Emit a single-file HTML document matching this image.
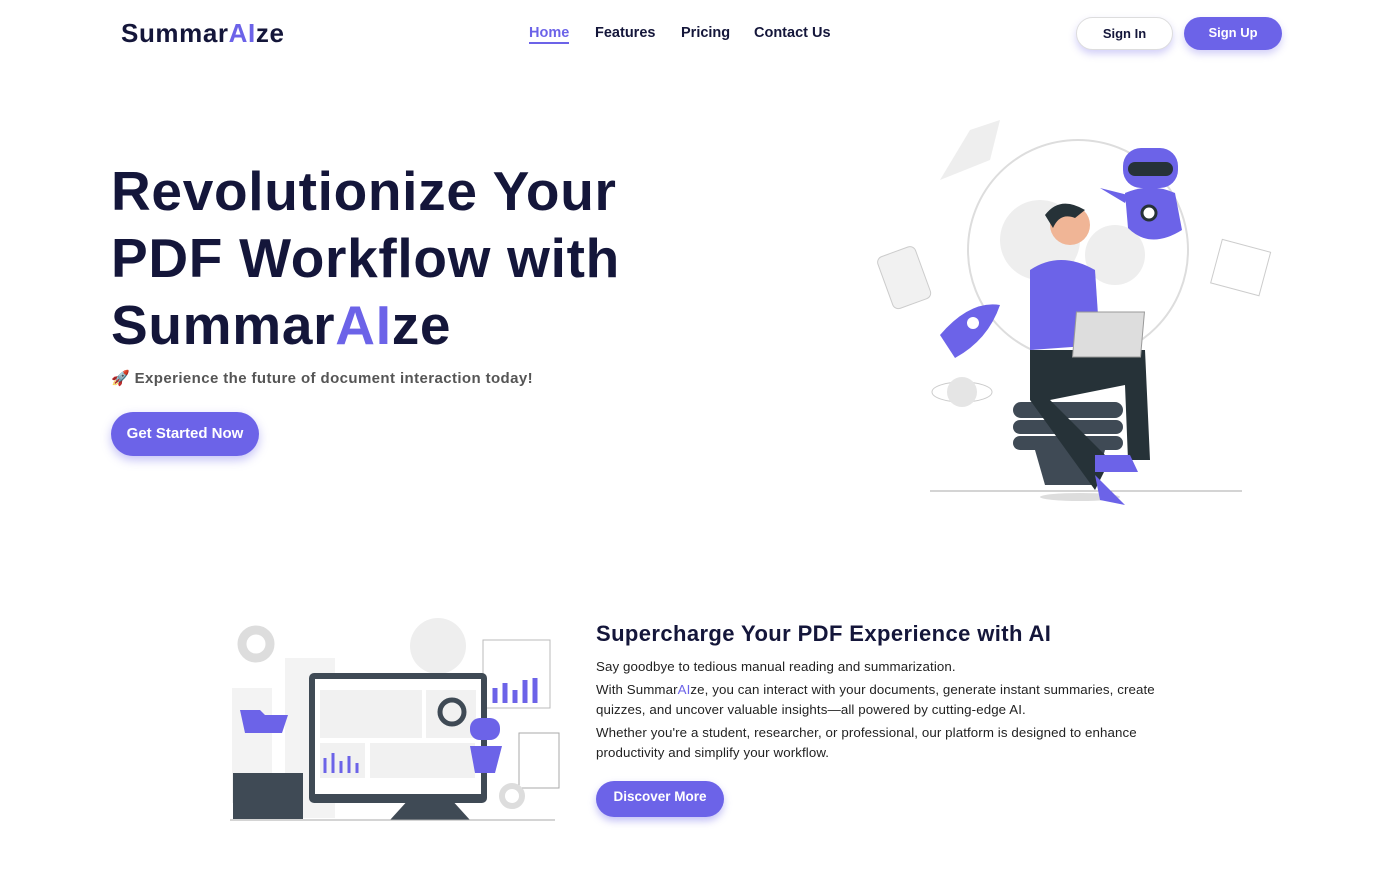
<!DOCTYPE html>
<html><head><meta charset="utf-8"><style>
*{margin:0;padding:0;box-sizing:border-box}
body{width:1395px;height:894px;background:#fff;font-family:"Liberation Sans",sans-serif;color:#14163a;position:relative;overflow:hidden}
.logo{position:absolute;left:121px;top:18px;font-size:26px;font-weight:bold;letter-spacing:0.6px}
.p{color:#6c63e8}
nav a{position:absolute;top:25px;font-size:14.5px;font-weight:bold;color:#14163a;text-decoration:none}
.btn{position:absolute;border-radius:20px;font-weight:bold;font-size:13px;text-align:center}
h1{position:absolute;left:111px;top:158px;font-size:55px;line-height:67px;font-weight:bold;letter-spacing:0.7px;color:#14163a}
.sub{position:absolute;left:111px;top:369px;font-size:15px;font-weight:bold;color:#555;letter-spacing:0.4px}
h2{position:absolute;left:596px;top:621px;font-size:22px;font-weight:bold;letter-spacing:0.4px}
.txt{position:absolute;left:596px;top:657px;font-size:13.3px;line-height:20px;color:#222;width:590px;letter-spacing:0.1px}
.txt p{margin-bottom:3px}
</style></head><body>
<div class="logo">Summar<span class="p">AI</span>ze</div>
<nav><a style="left:529px;color:#6c63e8;border-bottom:2px solid #6c63e8;padding-bottom:1px">Home</a><a style="left:595px">Features</a><a style="left:681px">Pricing</a><a style="left:754px">Contact Us</a></nav>
<div class="btn" style="left:1076px;top:17px;width:97px;height:33px;line-height:31px;background:#fff;border:1px solid #ddd;box-shadow:0 4px 8px rgba(108,99,232,.3)">Sign In</div>
<div class="btn" style="left:1184px;top:17px;width:98px;height:33px;line-height:31px;background:#6c63e8;color:#fff;box-shadow:0 4px 8px rgba(108,99,232,.3)">Sign Up</div>
<h1>Revolutionize Your<br>PDF Workflow with<br>Summar<span class="p">AI</span>ze</h1>
<div class="sub">🚀 Experience the future of document interaction today!</div>
<div class="btn" style="left:111px;top:412px;width:148px;height:44px;line-height:44px;border-radius:22px;background:#6c63e8;color:#fff;font-size:15px;box-shadow:0 4px 10px rgba(108,99,232,.4)">Get Started Now</div>

<svg style="position:absolute;left:870px;top:100px" width="420" height="420">
<ellipse cx="208" cy="150" rx="110" ry="110" fill="none" stroke="#ddd" stroke-width="2"/>
<circle cx="170" cy="140" r="40" fill="#eee"/><circle cx="245" cy="155" r="30" fill="#eee"/>
<rect x="15" y="150" width="40" height="55" rx="6" fill="#f1f1f1" stroke="#ccc" transform="rotate(-20 35 180)"/>
<rect x="345" y="145" width="50" height="45" fill="none" stroke="#ccc" transform="rotate(15 370 170)"/>
<ellipse cx="92" cy="292" rx="30" ry="10" fill="none" stroke="#ccc"/><circle cx="92" cy="292" r="15" fill="#e5e5e5"/>
<rect x="143" y="302" width="110" height="16" rx="8" fill="#3f4a55"/><rect x="143" y="320" width="110" height="14" rx="7" fill="#3f4a55"/><rect x="143" y="336" width="110" height="14" rx="7" fill="#3f4a55"/>
<path d="M165 350 L235 350 L225 385 L175 385Z" fill="#3f4a55"/>
<ellipse cx="210" cy="397" rx="40" ry="4" fill="#ddd"/>
<line x1="60" y1="391" x2="372" y2="391" stroke="#aaa"/>
<path d="M160 250 L275 250 L280 360 L258 360 L255 285 L180 300 L240 360 L225 390 L160 300Z" fill="#263238"/>
<path d="M160 170 Q190 150 225 170 L230 245 L160 250Z" fill="#6c63e8"/>
<circle cx="200" cy="125" r="20" fill="#f0b596"/><path d="M175 115 Q190 95 215 110 L205 118 Q190 112 183 128Z" fill="#263238"/>
<rect x="225" y="212" width="68" height="45" fill="#ddd" stroke="#999" transform="skewX(-5)"/>
<path d="M225 355 L260 355 L268 372 L225 372Z M225 375 L245 395 L255 405 L230 400Z" fill="#6c63e8"/>
<rect x="253" y="48" width="55" height="40" rx="18" fill="#6c63e8"/><rect x="258" y="62" width="45" height="14" rx="7" fill="#263238"/>
<path d="M255 93 Q280 82 305 93 L312 130 Q280 150 258 128Z" fill="#6c63e8"/><circle cx="279" cy="113" r="7" fill="#fff" stroke="#263238" stroke-width="3"/>
<path d="M230 88 L258 95 L255 103Z" fill="#6c63e8"/>
<path d="M70 235 Q100 200 130 205 Q118 240 85 258Z" fill="#6c63e8"/><circle cx="103" cy="223" r="6" fill="#fff"/>
<path d="M100 30 L130 20 L120 60 L70 80 Z" fill="#eee"/>
</svg>

<svg style="position:absolute;left:230px;top:618px" width="335" height="205">
<circle cx="26" cy="26" r="14" fill="none" stroke="#ddd" stroke-width="9"/>
<circle cx="208" cy="28" r="28" fill="#eee"/>
<rect x="2" y="70" width="40" height="115" fill="#f3f3f3"/><rect x="55" y="40" width="50" height="160" fill="#f3f3f3"/>
<rect x="3" y="155" width="70" height="46" fill="#3f4a55"/>
<path d="M10 92 L30 92 L35 97 L58 97 L52 115 L15 115Z" fill="#6c63e8"/>
<rect x="253" y="22" width="67" height="68" fill="#fff" stroke="#bbb"/>
<path d="M265 85 L265 70 M275 85 L275 65 M285 85 L285 72 M295 85 L295 62 M305 85 L305 60" stroke="#6c63e8" stroke-width="5"/>
<rect x="79" y="55" width="178" height="130" rx="5" fill="#3f4a55"/><rect x="85" y="61" width="166" height="115" fill="#fff"/>
<rect x="90" y="72" width="102" height="48" fill="#f1f1f1"/><rect x="196" y="72" width="50" height="48" fill="#f1f1f1"/>
<circle cx="222" cy="94" r="12" fill="none" stroke="#3f4a55" stroke-width="5"/>
<rect x="90" y="125" width="45" height="35" fill="#f1f1f1"/><rect x="140" y="125" width="105" height="35" fill="#f1f1f1"/>
<path d="M95 155 V140 M103 155 V135 M111 155 V143 M119 155 V138 M127 155 V145" stroke="#6c63e8" stroke-width="3"/>
<path d="M180 180 L160 202 L240 202 L220 180Z" fill="#3f4a55"/>
<rect x="289" y="115" width="40" height="55" fill="#fff" stroke="#aaa"/>
<rect x="240" y="100" width="30" height="22" rx="10" fill="#6c63e8"/><path d="M240 128 L272 128 L265 155 L245 155Z" fill="#6c63e8"/>
<circle cx="282" cy="178" r="10" fill="none" stroke="#ddd" stroke-width="6"/>
<line x1="0" y1="202" x2="325" y2="202" stroke="#aaa"/>
</svg>

<h2>Supercharge Your PDF Experience with AI</h2>
<div class="txt">
<p>Say goodbye to tedious manual reading and summarization.</p>
<p>With Summar<span class="p">AI</span>ze, you can interact with your documents, generate instant summaries, create quizzes, and uncover valuable insights—all powered by cutting-edge AI.</p>
<p>Whether you're a student, researcher, or professional, our platform is designed to enhance productivity and simplify your workflow.</p>
</div>
<div class="btn" style="left:596px;top:781px;width:128px;height:36px;line-height:32px;border-radius:18px;background:#6c63e8;color:#fff;font-size:13.5px;box-shadow:0 4px 8px rgba(108,99,232,.4)">Discover More</div>
</body></html>
